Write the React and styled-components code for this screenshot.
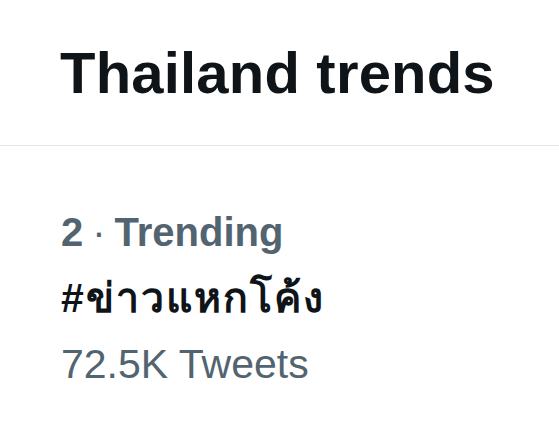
import React from 'react';
import styled, { createGlobalStyle } from 'styled-components';

const GlobalStyle = createGlobalStyle`
  html, body {
    margin: 0;
    padding: 0;
    background: #ffffff;
  }
  body {
    font-family: "Liberation Sans", Arial, "Noto Sans", sans-serif;
    -webkit-font-smoothing: antialiased;
  }
`;

const Page = styled.div`
  width: 559px;
  height: 427px;
  overflow: hidden;
  background: #ffffff;
`;

const Header = styled.div`
  padding: 38px 0 0 60px;
  height: 146px;
  box-sizing: border-box;
  border-bottom: 1px solid #dfe5e8;
`;

const Title = styled.h1`
  margin: 0;
  font-size: 58px;
  font-weight: 700;
  line-height: 70px;
  color: #0f1419;
  letter-spacing: 0.2px;
`;

const TrendItem = styled.div`
  padding: 53px 0 0 61px;
  display: flex;
  flex-direction: column;
`;

const Meta = styled.div`
  font-size: ${p => p.$size}px;
  font-weight: ${p => (p.$bold ? 700 : 400)};
  line-height: 66px;
  color: #536471;
`;

const Dot = styled.span`
  margin: 0 9px;
  font-weight: 400;
`;

const Hashtag = styled.div`
  font-size: 41px;
  font-weight: 700;
  line-height: 66px;
  color: #0f1419;
  letter-spacing: 2px;
`;

export default function App() {
  return (
    <Page>
      <GlobalStyle />
      <Header>
        <Title>Thailand trends</Title>
      </Header>
      <TrendItem>
        <Meta $bold $size={40}>
          2<Dot>·</Dot>Trending
        </Meta>
        <Hashtag>#ข่าวแหกโค้ง</Hashtag>
        <Meta $size={41}>72.5K Tweets</Meta>
      </TrendItem>
    </Page>
  );
}
